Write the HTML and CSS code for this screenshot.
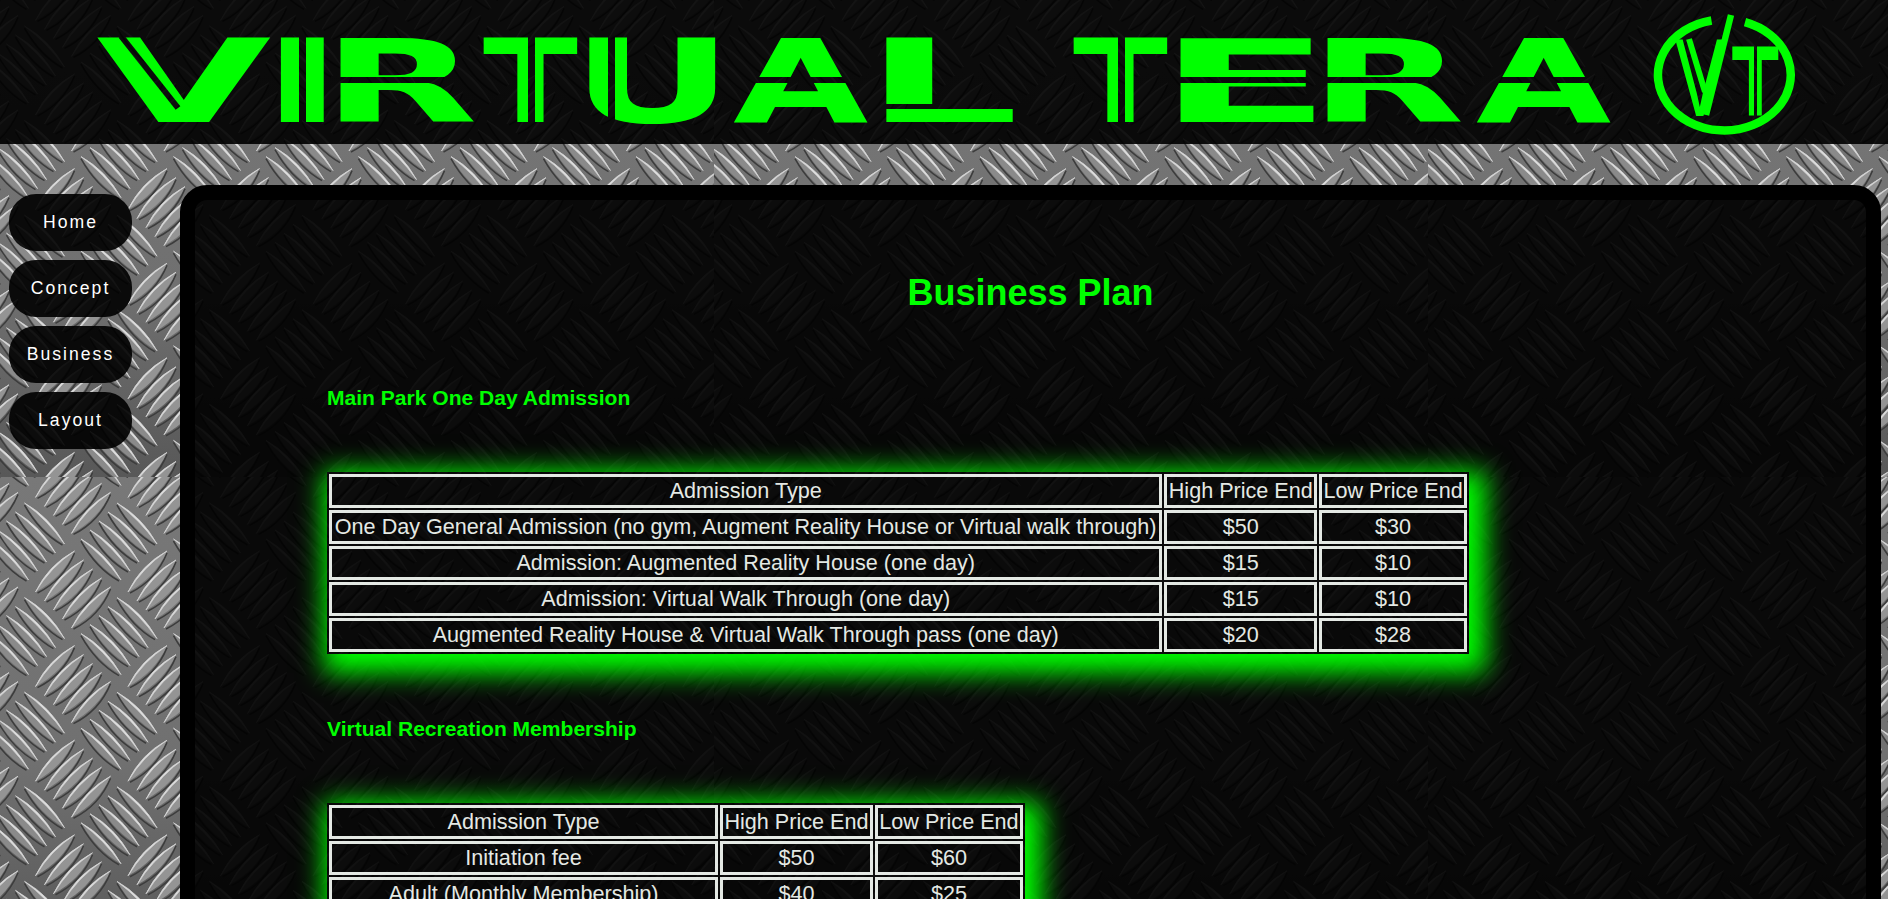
FILE: index.html
```html
<!DOCTYPE html>
<html lang="en">
<head>
<meta charset="utf-8">
<title>Virtual Tera - Business Plan</title>
<link rel="stylesheet" href="styles.css">
</head>
<body>
<header class="banner">
  <svg class="banner-art" width="1888" height="144" viewBox="0 0 1888 144">
    <defs>
      <mask id="stencil" maskUnits="userSpaceOnUse" x="0" y="0" width="1888" height="144">
        <rect width="1888" height="144" fill="#fff"/>
        <g fill="#000">
          <rect x="299" y="30" width="7" height="100"/>
          <rect x="528" y="30" width="7" height="100"/>
          <rect x="608" y="30" width="7" height="100"/>
          <rect x="1118" y="30" width="7" height="100"/>
          <rect x="340" y="77" width="138" height="6"/>
          <rect x="732" y="77" width="138" height="6"/>
          <rect x="885" y="104" width="135" height="5"/>
          <rect x="1179" y="77" width="286" height="6"/>
          <rect x="1475" y="77" width="138" height="6"/>
          <rect x="1754" y="40" width="3" height="80"/>
        </g>
        <path d="M121 36L178 108" stroke="#000" stroke-width="6"/>
      </mask>
    </defs>
    <g class="wordmark" mask="url(#stencil)">
      <text transform="translate(96.2 122) scale(1.966 1)">V</text>
      <text transform="translate(260 122) scale(1.98 1)">I</text>
      <text transform="translate(322 122) scale(1.76 1)">R</text>
      <text transform="translate(483 122) scale(1.21 1)">T</text>
      <text transform="translate(571 122) scale(1.74 1)">U</text>
      <text transform="translate(733 122) scale(1.52 1)">A</text>
      <text transform="translate(864 122) scale(2.12 1)">L</text>
      <text transform="translate(1073 122) scale(1.21 1)">T</text>
      <text transform="translate(1157 122) scale(2.23 1)">E</text>
      <text transform="translate(1309 122) scale(1.76 1)">R</text>
      <text transform="translate(1476 122) scale(1.52 1)">A</text>
      <text class="mono-v" transform="translate(1675 115.5) scale(.67 1)">V</text>
      <text class="mono-t" transform="translate(1732 115.5) scale(.72 1)">T</text>
    </g>
    <g fill="none" stroke="#0f0">
      <path d="M1745 22.2A66.4 55.5 0 1 1 1711.5 20.5" stroke-width="8.5"/>
      <path d="M1706 115L1731 15" stroke-width="6.5"/>
      <path d="M1689 39L1705 92" stroke-width="6"/>
    </g>
  </svg>
</header>
<div class="page">
  <nav class="menu">
    <a>Home</a>
    <a>Concept</a>
    <a>Business</a>
    <a>Layout</a>
  </nav>
  <main class="content">
    <h1>Business Plan</h1>
    <h3>Main Park One Day Admission</h3>
    <table class="prices">
      <tr><td>Admission Type</td><td>High Price End</td><td>Low Price End</td></tr>
      <tr><td>One Day General Admission (no gym, Augment Reality House or Virtual walk through)</td><td>$50</td><td>$30</td></tr>
      <tr><td>Admission: Augmented Reality House (one day)</td><td>$15</td><td>$10</td></tr>
      <tr><td>Admission: Virtual Walk Through (one day)</td><td>$15</td><td>$10</td></tr>
      <tr><td>Augmented Reality House &amp; Virtual Walk Through pass (one day)</td><td>$20</td><td>$28</td></tr>
    </table>
    <h3>Virtual Recreation Membership</h3>
    <table class="prices membership">
      <tr><td>Admission Type</td><td>High Price End</td><td>Low Price End</td></tr>
      <tr><td>Initiation fee</td><td>$50</td><td>$60</td></tr>
      <tr><td>Adult (Monthly Membership)</td><td>$40</td><td>$25</td></tr>
      <tr><td></td><td></td><td></td></tr>
    </table>
  </main>
</div>
</body>
</html>
```
FILE: styles.css
```css
html, body { margin: 0; height: 100%; overflow: hidden; }
body {
  font: 18px Arial, "Liberation Sans", sans-serif;
  color: #fff;
  background: #707070 url("data:image/svg+xml,%3Csvg xmlns='http://www.w3.org/2000/svg' xmlns:xlink='http://www.w3.org/1999/xlink' width='714' height='477'%3E%3Cdefs%3E%3ClinearGradient id='s' x2='0' y2='1'%3E%3Cstop stop-color='%23787878'/%3E%3Cstop offset='.6' stop-color='%23707070'/%3E%3Cstop offset='1' stop-color='%23585858'/%3E%3C/linearGradient%3E%3Cg id='a'%3E%3Cpath d='M0 2Q15 29 38 42' fill='none' stroke='%233c3c3c' stroke-width='1.6'/%3E%3Cpath d='M0 0Q26 15 40 41Q16 28 0 0' fill='%238a8a8a'/%3E%3Cpath d='M0 0Q25 14 40 41Q23 17 0 0' fill='%23e0e0e0' stroke='%23d0d0d0' stroke-width='.8'/%3E%3C/g%3E%3Cg id='b'%3E%3Cpath d='M39 2Q28 29 2 42' fill='none' stroke='%233c3c3c' stroke-width='1.6'/%3E%3Cpath d='M39 0Q27 27 0 41Q12 15 39 0' fill='%23949494'/%3E%3Cpath d='M39 0Q13 14 0 41Q15 16 39 0' fill='%23e0e0e0' stroke='%23d0d0d0' stroke-width='.8'/%3E%3C/g%3E%3Cg id='c'%3E%3Cuse xlink:href='%23a'/%3E%3Cuse xlink:href='%23a' x='-9' y='9'/%3E%3Cuse xlink:href='%23a' x='-18' y='18'/%3E%3Cuse xlink:href='%23a' x='-27' y='27'/%3E%3Cuse xlink:href='%23a' x='-36' y='36'/%3E%3Cuse xlink:href='%23b' x='11' y='48'/%3E%3Cuse xlink:href='%23b' x='20' y='57'/%3E%3Cuse xlink:href='%23b' x='29' y='66'/%3E%3Cuse xlink:href='%23b' x='38' y='75'/%3E%3Cuse xlink:href='%23b' x='47' y='84'/%3E%3C/g%3E%3Cg id='d'%3E%3Cuse xlink:href='%23c' x='-68' y='26'/%3E%3Cuse xlink:href='%23c' x='24.5' y='26'/%3E%3Cuse xlink:href='%23c' x='117' y='26'/%3E%3Cuse xlink:href='%23c' x='209.5' y='26'/%3E%3Cuse xlink:href='%23c' x='302' y='26'/%3E%3Cuse xlink:href='%23c' x='394.5' y='26'/%3E%3Cuse xlink:href='%23c' x='487' y='26'/%3E%3Cuse xlink:href='%23c' x='579.5' y='26'/%3E%3Cuse xlink:href='%23c' x='672' y='26'/%3E%3Cuse xlink:href='%23c' x='764.5' y='26'/%3E%3C/g%3E%3C/defs%3E%3Crect width='714' height='477' fill='url(%23s)'/%3E%3Cuse xlink:href='%23d' y='-94.6'/%3E%3Cuse xlink:href='%23d'/%3E%3Cuse xlink:href='%23d' y='94.6'/%3E%3Cuse xlink:href='%23d' y='189.2'/%3E%3Cuse xlink:href='%23d' y='283.8'/%3E%3Cuse xlink:href='%23d' y='378.4'/%3E%3Cuse xlink:href='%23d' y='473'/%3E%3C/svg%3E") 0 0 / 714px 477px;
}
.banner { height: 144px; background: rgba(0, 0, 0, .91); }
.banner-art { display: block; }
.wordmark { fill: #0f0; font: bold 115px "DejaVu Sans", sans-serif; }
.mono-v { font: 111px "Liberation Sans", sans-serif; }
.mono-t { font-size: 95px; }

.page { display: flex; align-items: flex-start; height: 755px; overflow: hidden; }
.menu { display: flex; flex-direction: column; gap: 9px; width: 123px; margin: 50px 48px 0 9px; }
.menu a {
  height: 57px;
  line-height: 56px;
  border-radius: 27px;
  background: rgba(0, 0, 0, .91);
  text-align: center;
  font-size: 17.6px;
  letter-spacing: 2px;
}
.content {
  box-sizing: border-box;
  width: 1701px;
  height: 1000px;
  margin-top: 41px;
  padding: 0 132px;
  border: 15px solid #000;
  border-radius: 27px;
  background: rgba(0, 0, 0, .92);
}
h1 { margin: 72px 0 73px; font-size: 36px; line-height: 41px; text-align: center; color: #0f0; }
h3 { margin: 0 0 62px; font-size: 21.06px; line-height: 24px; color: #0f0; }
.prices {
  width: 1142px;
  margin-bottom: 63px;
  border-spacing: 2px;
  font-size: 21.6px;
  text-align: center;
  color: #e4e9e4;
  box-shadow: 7px 9px 25px 10px #0f0;
}
.prices td { height: 28px; padding: 0 1px; border: 3px solid #e4e9e4; line-height: 28px; white-space: nowrap; }
.membership { width: 698px; }
.membership td:first-child { width: 381px; }
```
